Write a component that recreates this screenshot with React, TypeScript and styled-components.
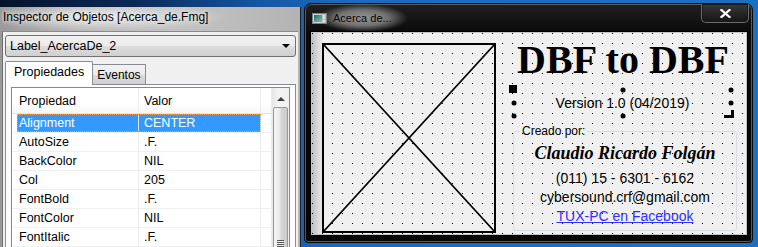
import React from "react"
import styled, { createGlobalStyle, css } from "styled-components"

const GlobalStyle = createGlobalStyle`
    html, body {
        margin: 0;
        padding: 0;
    }
    body {
        width: 758px;
        height: 247px;
        overflow: hidden;
        font-family: "Liberation Sans", Arial, sans-serif;
        background: #1b6cc0;
    }
`

const Desktop = styled.div`
    display: flex;
    align-items: flex-start;
    gap: 3px;
    width: 758px;
    height: 247px;
    overflow: hidden;
    background: linear-gradient(90deg, #06122a 0%, #0b2a58 18%, #1456a3 34%, #1a6bbf 45%, #1c70c4 100%);
`

/* ---------- Inspector window ---------- */

const InspectorWindow = styled.div`
    flex: none;
    width: 301px;
    height: 240px;
    margin-top: 7px;
    box-sizing: border-box;
    padding: 0 2px;
    border-right: 1px solid #202020;
    display: flex;
    flex-direction: column;
    background: linear-gradient(90deg, #9a9a9a 0%, #b8b8b8 25%, #c3c3c3 60%, #b3b3b3 100%);
`
const InspectorTitle = styled.div`
    flex: none;
    height: 24px;
    padding-left: 1px;
    line-height: 20px;
    font-size: 12px;
    color: #000;
    white-space: nowrap;
    background: radial-gradient(ellipse 125px 14px at 100px 10px, rgba(236,236,236,0.95), rgba(236,236,236,0));
    text-shadow: 0 0 5px rgba(255,255,255,0.9);
`
const InspectorClient = styled.div`
    flex: 1;
    display: flex;
    flex-direction: column;
    min-height: 0;
    padding: 3px 2px 0 2px;
    background: #f0f0f0;
    border-left: 1px solid #6e6e6e;
    border-top: 1px solid #8a8a8a;
`
const Combo = styled.div`
    flex: none;
    height: 22px;
    box-sizing: border-box;
    display: flex;
    align-items: center;
    padding: 0 5px 0 4px;
    border: 1px solid #707070;
    border-radius: 3px;
    font-size: 12.5px;
    color: #000;
    background: linear-gradient(180deg, #f2f2f2 0%, #ebebeb 48%, #dddddd 52%, #cfcfcf 100%);
`
const ComboText = styled.span`
    flex: 1;
`
const ComboArrow = styled.span`
    width: 0;
    height: 0;
    border-left: 4px solid transparent;
    border-right: 4px solid transparent;
    border-top: 4px solid #000;
`
const TabStrip = styled.div`
    flex: none;
    display: flex;
    align-items: flex-end;
    height: 24px;
    margin-top: 4px;
    margin-bottom: -1px;
    position: relative;
    z-index: 1;
`
const Tab = styled.div<{ $active?: boolean }>`
    box-sizing: border-box;
    border: 1px solid #898c95;
    border-bottom: none;
    font-size: 12px;
    color: #000;
    ${({ $active }) => $active ? css`
        height: 24px;
        padding: 3px 8px 0 8px;
        background: #ffffff;
        border-radius: 2px 2px 0 0;
        font-size: 12.5px;
    ` : css`
        height: 20px;
        margin-bottom: 1px;
        padding: 3px 4px 0 4px;
        border-left: none;
        background: linear-gradient(180deg, #f2f2f2 0%, #ebebeb 50%, #dcdcdc 51%, #cfcfcf 100%);
    `}
`
const TabPage = styled.div`
    flex: 1;
    display: flex;
    flex-direction: column;
    min-height: 0;
    padding: 2px 5px 0 5px;
    border: 1px solid #898c95;
    border-bottom: none;
    background: #fcfcfc;
`
const PropGrid = styled.div`
    flex: 1;
    display: flex;
    min-height: 0;
    border: 1px solid #828790;
    border-bottom: none;
    background: #ffffff;
    overflow: hidden;
`
const GridTable = styled.div`
    width: 260px;
    flex: none;
    font-size: 12.5px;
`
const GridRow = styled.div<{ $header?: boolean }>`
    display: flex;
    box-sizing: border-box;
    height: ${({ $header }) => $header ? 26 : 19}px;
    border-bottom: 1px solid ${({ $header }) => $header ? "#e3e3e3" : "#f0f0f0"};
    ${({ $header }) => $header && css`
        background: linear-gradient(180deg, #ffffff 0%, #ffffff 60%, #f6f7f8 100%);
    `}
`
const Indent = styled.div`
    width: 5px;
    flex: none;
`
const Cell = styled.div<{ $width: number; $pad: number; $selected?: boolean }>`
    width: ${({ $width }) => $width}px;
    flex: none;
    box-sizing: border-box;
    display: flex;
    align-items: center;
    padding-left: ${({ $pad }) => $pad}px;
    border-right: 1px solid #ececec;
    white-space: nowrap;
    color: #000;
    ${({ $selected }) => $selected && css`
        background: #3399ff;
        color: #ffffff;
        border-right-color: #d8e9fb;
    `}
`
const SelectedPair = styled.div`
    display: flex;
    outline: 1px dotted #f0a050;
    outline-offset: -1px;
`
const Filler = styled.div`
    flex: 1;
    border-right: 1px solid #ececec;
`
const ScrollBar = styled.div`
    flex: 1;
    display: flex;
    flex-direction: column;
    align-items: center;
    background: linear-gradient(90deg, #e6e6e6 0%, #f4f4f4 40%, #f0f0f0 100%);
`
const ScrollUp = styled.div`
    flex: none;
    height: 19px;
    width: 100%;
    display: flex;
    justify-content: center;
    padding-top: 9px;
    box-sizing: border-box;
`
const UpArrow = styled.span`
    width: 0;
    height: 0;
    border-left: 4px solid transparent;
    border-right: 4px solid transparent;
    border-bottom: 4px solid #404040;
`
const Thumb = styled.div`
    flex: none;
    width: 15px;
    height: 272px;
    box-sizing: border-box;
    margin-right: 1px;
    border: 1px solid #979797;
    border-radius: 2px;
    display: flex;
    align-items: center;
    justify-content: center;
    background: linear-gradient(90deg, #f4f4f4 0%, #e8e8e8 45%, #d6d6d6 55%, #cbcbcb 100%);
`
const Grip = styled.div`
    width: 7px;
    height: 7px;
    background: repeating-linear-gradient(180deg, #555 0px, #555 1px, #eee 1px, #eee 2px);
`

/* ---------- About window ---------- */

const AboutWindow = styled.div`
    flex: none;
    width: 449px;
    height: 240px;
    margin-top: 3px;
    box-sizing: border-box;
    border: 1px solid #0a0a0a;
    border-radius: 7px 7px 4px 4px;
    padding: 0 5px 7px 6px;
    display: flex;
    flex-direction: column;
    background: linear-gradient(180deg, #202020 0%, #0a0a0a 12%, #060606 100%);
    box-shadow: inset 0 0 0 1px #5a5a5a;
`
const AboutTitleBar = styled.div`
    flex: none;
    height: 28px;
    display: flex;
    align-items: center;
`
const AppIcon = styled.svg`
    margin-left: 1px;
    flex: none;
`
const AboutTitle = styled.span`
    font-size: 11px;
    color: #000;
    padding: 8px 16px;
    margin: 0 -16px 0 -10px;
    background: radial-gradient(closest-side, rgba(150,150,150,1) 0%, rgba(130,130,130,0.85) 55%, rgba(90,90,90,0) 100%);
    text-shadow: 0 0 2px rgba(150,150,150,0.9);
`
const CloseButton = styled.div`
    margin-left: auto;
    margin-right: -2px;
    align-self: flex-start;
    width: 48px;
    height: 19px;
    box-sizing: border-box;
    display: flex;
    align-items: center;
    justify-content: center;
    border: 1px solid #6a6a6a;
    border-top: none;
    border-radius: 0 0 5px 5px;
    background: linear-gradient(180deg, #3a3a3a 0%, #262626 50%, #161616 100%);
    box-shadow: inset 0 0 0 1px #1a1a1a;
`
const AboutClient = styled.div`
    flex: 1;
    display: flex;
    min-height: 0;
    border: 1px solid #c4c4c4;
    box-shadow: 0 0 0 1px #000;
    background-color: #f0f0f0;
    background-image:
        linear-gradient(90deg, rgba(0,0,0,0.2) 0px, rgba(0,0,0,0) 12px),
        linear-gradient(180deg, transparent 1px, #f0f0f0 1px),
        linear-gradient(90deg, #000 1px, transparent 1px);
    background-size: 100% 100%, 10px 10px, 10px 10px;
    background-repeat: no-repeat, repeat, repeat;
`
const PicturePlaceholder = styled.div`
    flex: none;
    width: 174px;
    height: 190px;
    margin: 10px 0 0 10px;
    box-sizing: border-box;
    border: 2px solid #000;
`
const InfoColumn = styled.div`
    flex: 1;
    display: flex;
    flex-direction: column;
    margin-left: 4px;
    color: #000;
`
const AppTitle = styled.div`
    margin-top: 7px;
    height: 40px;
    line-height: 40px;
    text-align: center;
    font-family: "Liberation Serif", "Times New Roman", serif;
    font-weight: 700;
    font-size: 40px;
    white-space: nowrap;
`
const SelectedLabel = styled.div`
    position: relative;
    height: 26px;
    margin: 10px 15px 0 14px;
    line-height: 26px;
    text-align: center;
    font-size: 14px;
`
const Handle = styled.span<{ $x: number; $y: number; $primary?: boolean }>`
    position: absolute;
    left: ${({ $x }) => $x}%;
    top: ${({ $y }) => $y}%;
    transform: translate(-50%, -50%);
    background: #000;
    ${({ $primary }) => $primary ? css`
        width: 8px;
        height: 8px;
        margin: -1px 0 0 -1px;
    ` : css`
        width: 5px;
        height: 5px;
        border-radius: 50%;
    `}
`
const CornerHandle = styled.span`
    position: absolute;
    right: -3px;
    bottom: -2px;
    width: 10px;
    height: 8px;
    box-sizing: border-box;
    border-right: 3px solid #000;
    border-bottom: 3px solid #000;
`
const CreditBox = styled.fieldset`
    margin: 8px 9px 0 13px;
    padding: 0 0 4px 0;
    min-width: 0;
    border: 1px solid #d3dde3;
    border-radius: 3px;
    display: flex;
    flex-direction: column;
    align-items: center;
`
const CreditCaption = styled.legend`
    margin-left: 6px;
    padding: 0 2px;
    font-size: 12px;
    line-height: 14px;
    text-align: left;
`
const AuthorName = styled.div`
    margin-top: 4px;
    line-height: 22px;
    font-family: "Liberation Serif", "Times New Roman", serif;
    font-weight: 700;
    font-style: italic;
    font-size: 18px;
    white-space: nowrap;
`
const ContactLine = styled.div<{ $first?: boolean }>`
    margin-top: ${({ $first }) => $first ? 5 : 0}px;
    line-height: 19px;
    font-size: 14px;
    white-space: nowrap;
`
const ContactLink = styled.a`
    color: #2f2fff;
    text-decoration: underline;
`

const properties = [
    { name: "Alignment", value: "CENTER" },
    { name: "AutoSize", value: ".F." },
    { name: "BackColor", value: "NIL" },
    { name: "Col", value: "205" },
    { name: "FontBold", value: ".F." },
    { name: "FontColor", value: "NIL" },
    { name: "FontItalic", value: ".F." },
]

const App = () => {
    const selected = 0

    const renderRows = () => {
        return properties.map((prop, index) => {
            const isSel = index === selected
            const cells = <>
                <Cell $width={122} $pad={2} $selected={isSel}>{prop.name}</Cell>
                <Cell $width={122} $pad={5} $selected={isSel}>{prop.value}</Cell>
            </>
            return <GridRow key={`prop-row-${index}`}>
                <Indent />
                {isSel ? <SelectedPair>{cells}</SelectedPair> : cells}
                <Filler />
            </GridRow>
        })
    }

    return <>
        <GlobalStyle />
        <Desktop>
            <InspectorWindow>
                <InspectorTitle>Inspector de Objetos [Acerca_de.Fmg]</InspectorTitle>
                <InspectorClient>
                    <Combo>
                        <ComboText>Label_AcercaDe_2</ComboText>
                        <ComboArrow />
                    </Combo>
                    <TabStrip>
                        <Tab $active>Propiedades</Tab>
                        <Tab>Eventos</Tab>
                    </TabStrip>
                    <TabPage>
                        <PropGrid>
                            <GridTable>
                                <GridRow $header>
                                    <Indent />
                                    <Cell $width={122} $pad={2}>Propiedad</Cell>
                                    <Cell $width={122} $pad={5}>Valor</Cell>
                                    <Filler />
                                </GridRow>
                                {renderRows()}
                            </GridTable>
                            <ScrollBar>
                                <ScrollUp><UpArrow /></ScrollUp>
                                <Thumb><Grip /></Thumb>
                            </ScrollBar>
                        </PropGrid>
                    </TabPage>
                </InspectorClient>
            </InspectorWindow>

            <AboutWindow>
                <AboutTitleBar>
                    <AppIcon width="15" height="11" viewBox="0 0 15 11">
                        <defs>
                            <linearGradient id="appicon-g" x1="0" y1="0" x2="1" y2="1">
                                <stop offset="0" stopColor="#1f6a6a" />
                                <stop offset="1" stopColor="#8fc2b8" />
                            </linearGradient>
                        </defs>
                        <rect x="0.5" y="0.5" width="14" height="10" fill="#d0d4d6" stroke="#7c8082" />
                        <rect x="2" y="2" width="8" height="7" fill="url(#appicon-g)" />
                        <rect x="11" y="2" width="2" height="4" fill="#ffffff" />
                        <rect x="11" y="7" width="2" height="2" fill="#ffffff" />
                    </AppIcon>
                    <AboutTitle>Acerca de...</AboutTitle>
                    <CloseButton>
                        <svg width="11" height="9" viewBox="0 0 11 9">
                            <path d="M1.5 1 L9.5 8 M9.5 1 L1.5 8" stroke="#ffffff" strokeWidth="2.3" strokeLinecap="square" fill="none" />
                        </svg>
                    </CloseButton>
                </AboutTitleBar>
                <AboutClient>
                    <PicturePlaceholder>
                        <svg width="100%" height="100%" viewBox="0 0 170 186" preserveAspectRatio="none">
                            <path d="M0 0 L170 186 M170 0 L0 186" stroke="#000" strokeWidth="1.6" fill="none" />
                        </svg>
                    </PicturePlaceholder>
                    <InfoColumn>
                        <AppTitle>DBF to DBF</AppTitle>
                        <SelectedLabel>
                            Version 1.0 (04/2019)
                            <Handle $x={0} $y={0} $primary />
                            <Handle $x={50} $y={0} />
                            <Handle $x={100} $y={0} />
                            <Handle $x={0} $y={50} />
                            <Handle $x={100} $y={50} />
                            <Handle $x={0} $y={100} />
                            <Handle $x={50} $y={100} />
                            <CornerHandle />
                        </SelectedLabel>
                        <CreditBox>
                            <CreditCaption>Creado por:</CreditCaption>
                            <AuthorName>Claudio Ricardo Folgán</AuthorName>
                            <ContactLine $first>(011) 15 - 6301 - 6162</ContactLine>
                            <ContactLine>cybersound.crf@gmail.com</ContactLine>
                            <ContactLine><ContactLink href="#">TUX-PC en Facebook</ContactLink></ContactLine>
                        </CreditBox>
                    </InfoColumn>
                </AboutClient>
            </AboutWindow>
        </Desktop>
    </>
}

export default App
